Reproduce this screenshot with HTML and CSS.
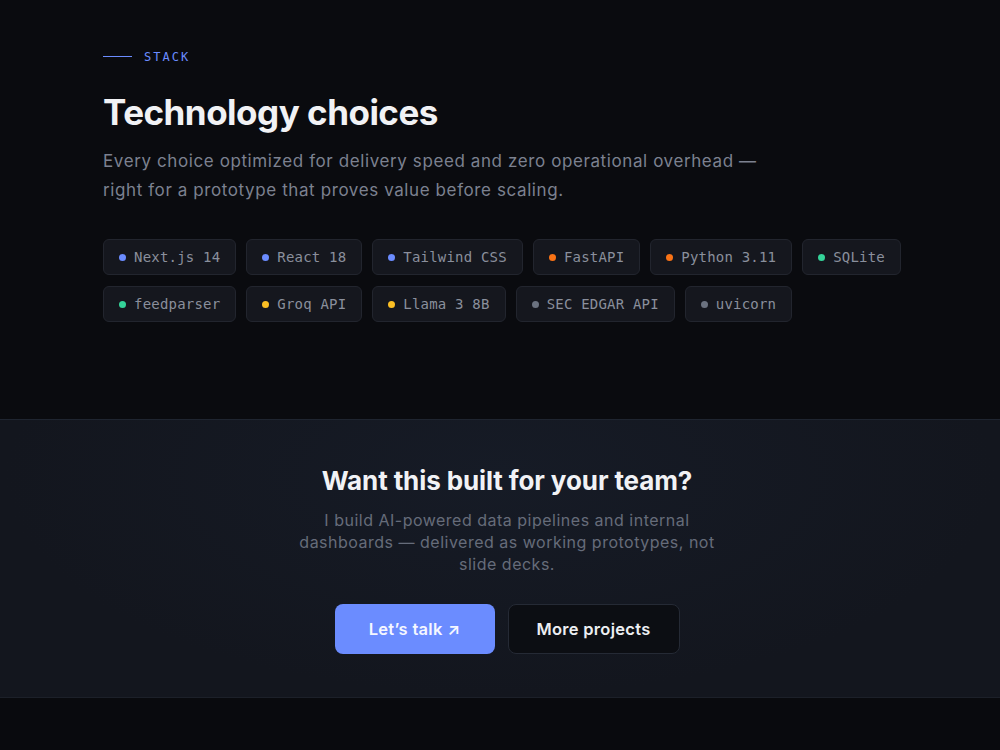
FILE: index.html
```html
<!DOCTYPE html>
<html lang="en">
<head>
<meta charset="utf-8">
<title>Technology choices</title>
<link rel="stylesheet" href="styles.css">
</head>
<body>
<section class="stack">
  <div class="container">
    <div class="eyebrow"><span class="eyebrow-line"></span><span class="eyebrow-text">STACK</span></div>
    <h2 class="title">Technology choices</h2>
    <p class="lead">Every choice optimized for delivery speed and zero operational overhead — right for a prototype that proves value before scaling.</p>
    <ul class="chips">
      <li class="chip"><span class="dot blue"></span>Next.js 14</li>
      <li class="chip"><span class="dot blue"></span>React 18</li>
      <li class="chip"><span class="dot blue"></span>Tailwind CSS</li>
      <li class="chip"><span class="dot orange"></span>FastAPI</li>
      <li class="chip"><span class="dot orange"></span>Python 3.11</li>
      <li class="chip"><span class="dot green"></span>SQLite</li>
      <li class="chip"><span class="dot green"></span>feedparser</li>
      <li class="chip"><span class="dot yellow"></span>Groq API</li>
      <li class="chip"><span class="dot yellow"></span>Llama 3 8B</li>
      <li class="chip"><span class="dot gray"></span>SEC EDGAR API</li>
      <li class="chip"><span class="dot gray"></span>uvicorn</li>
    </ul>
  </div>
</section>
<section class="cta">
  <h2 class="cta-title">Want this built for your team?</h2>
  <p class="cta-text">I build AI-powered data pipelines and internal dashboards — delivered as working prototypes, not slide decks.</p>
  <div class="cta-actions">
    <a class="btn btn-primary" href="#">Let’s talk ↗</a>
    <a class="btn btn-ghost" href="#">More projects</a>
  </div>
</section>
<footer class="footer"></footer>
</body>
</html>
```
FILE: styles.css
```css
* { box-sizing: border-box; }

html, body {
  margin: 0;
  padding: 0;
  background: #0a0b0f;
  color: #e8eaef;
  font-family: Inter, "Noto Sans", sans-serif;
}

.container {
  padding: 0 60px 0 103px;
}

.stack {
  padding: 48px 0 0;
  height: 419px;
}

.eyebrow {
  display: flex;
  align-items: center;
  gap: 12px;
  height: 17px;
}

.eyebrow-line {
  width: 29px;
  height: 1px;
  background: #6b8cff;
}

.eyebrow-text {
  font-family: "DejaVu Sans Mono", monospace;
  font-size: 12px;
  letter-spacing: 2px;
  color: #6b8cff;
}

.title {
  margin: 24px 0 0;
  font-size: 35px;
  font-weight: 700;
  letter-spacing: -0.5px;
  line-height: 46px;
  color: #f1f2f5;
}

.lead {
  margin: 12px 0 0;
  max-width: 680px;
  font-size: 17px;
  line-height: 29px;
  letter-spacing: 0.6px;
  color: #7c8190;
}

.chips {
  list-style: none;
  margin: 34px 0 0;
  padding: 0;
  display: flex;
  flex-wrap: wrap;
  gap: 11px 10px;
  max-width: 810px;
}

.chip {
  display: flex;
  align-items: center;
  gap: 8px;
  height: 36px;
  padding: 0 15px;
  border: 1px solid #22252e;
  border-radius: 6px;
  background: #15171e;
  font-family: "DejaVu Sans Mono", monospace;
  font-size: 14px;
  letter-spacing: 0.2px;
  color: #8a8f9c;
}

.dot {
  width: 7px;
  height: 7px;
  border-radius: 50%;
  flex: none;
}
.dot.blue { background: #6b8cff; }
.dot.orange { background: #f97316; }
.dot.green { background: #34d399; }
.dot.yellow { background: #fbbf24; }
.dot.gray { background: #6b7280; }

.cta {
  border-top: 1px solid #1f2530;
  border-bottom: 1px solid #1c2029;
  background: radial-gradient(ellipse at 50% 20%, #161b26 0%, #13161e 70%);
  padding: 44px 0 43px 14px;
  text-align: center;
}

.cta-title {
  margin: 0;
  font-size: 26px;
  font-weight: 700;
  letter-spacing: -0.1px;
  line-height: 34px;
  color: #f1f2f5;
}

.cta-text {
  margin: 11px auto 0;
  max-width: 430px;
  font-size: 16px;
  line-height: 22px;
  letter-spacing: 0.5px;
  color: #666c7a;
}

.cta-actions {
  margin-top: 29px;
  display: flex;
  justify-content: center;
  gap: 13px;
}

.btn {
  display: flex;
  align-items: center;
  justify-content: center;
  height: 50px;
  border-radius: 8px;
  font-size: 16.5px;
  font-weight: 600;
  letter-spacing: 0.3px;
  text-decoration: none;
}

.btn-primary {
  width: 160px;
  background: #6b8cff;
  color: #f5f7ff;
}

.btn-ghost {
  width: 172px;
  border: 1px solid #252a35;
  background: #0c0e13;
  color: #eceef2;
}

.footer {
  height: 60px;
  background: #090a0e;
}
```
